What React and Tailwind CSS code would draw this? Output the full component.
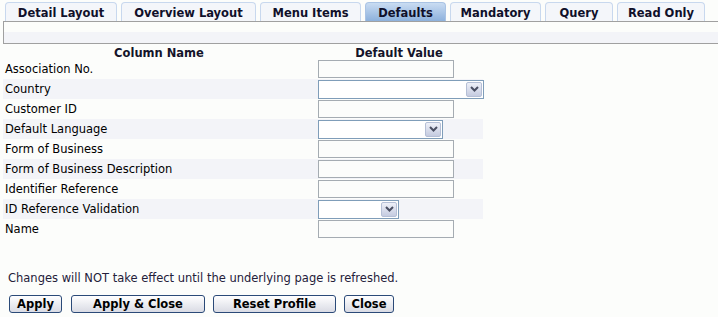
const tabs = [
  { name: "Detail Layout", w: "w-[112px]" },
  { name: "Overview Layout", w: "w-[135px]" },
  { name: "Menu Items", w: "w-[101px]" },
  { name: "Defaults", w: "w-[81px]", active: true },
  { name: "Mandatory", w: "w-[91px]" },
  { name: "Query", w: "w-[68px]" },
  { name: "Read Only", w: "w-[88px]" },
];

const rows = [
  { label: "Association No.", type: "text" },
  { label: "Country", type: "select", w: "w-[166px]" },
  { label: "Customer ID", type: "text" },
  { label: "Default Language", type: "select", w: "w-[125px]" },
  { label: "Form of Business", type: "text" },
  { label: "Form of Business Description", type: "text" },
  { label: "Identifier Reference", type: "text" },
  { label: "ID Reference Validation", type: "select", w: "w-[81px]" },
  { label: "Name", type: "text" },
];

function Chevron() {
  return (
    <svg width="9" height="6" viewBox="0 0 9 6">
      <path d="M1 1 L4.5 4.5 L8 1" fill="none" stroke="#4a4f63" strokeWidth="2" />
    </svg>
  );
}

function FakeSelect({ w }) {
  return (
    <div className={`${w} h-[19px] border border-[#7f9db9] bg-white flex justify-end p-px`}>
      <div className="w-[16px] h-full border border-[#b5bfd6] rounded-[2px] bg-gradient-to-b from-[#eef0f8] to-[#c5cbe0] flex items-center justify-center">
        <Chevron />
      </div>
    </div>
  );
}

function Btn({ children, w }) {
  return (
    <button
      type="button"
      className={`${w} h-[18px] border border-[#2b4a78] rounded-[3px] bg-gradient-to-b from-white to-[#d9dbe4] text-[11.5px] font-bold text-black leading-none flex items-center justify-center pt-px`}
    >
      {children}
    </button>
  );
}

export default function App() {
  return (
    <div className="w-[718px] h-[317px] bg-[#fcfdfb] font-['Tahoma','DejaVu_Sans',sans-serif] text-[11.5px] text-black overflow-hidden">
      {/* tabs */}
      <div className="flex gap-[4px] pl-[5px] pt-[2px] h-[21px]">
        {tabs.map((t) => (
          <div
            key={t.name}
            className={`${t.w} h-[19px] border border-b-0 rounded-t-[4px] flex items-center justify-center pt-[3px] text-[11.5px] font-bold text-[#10102a] ${
              t.active
                ? "border-[#a9c3e4] bg-gradient-to-b from-[#c9dcf2] to-[#8db1dc]"
                : "border-[#c8d8ee] bg-[#f4f6fa]"
            }`}
          >
            {t.name}
          </div>
        ))}
      </div>

      {/* toolbar strip */}
      <div className="ml-[3px] border-t border-l border-b border-[#a0a0a0]">
        <div className="h-[10px] bg-[#fcfdfb]" />
        <div className="h-[11px] bg-[#f3f4f8]" />
      </div>

      {/* defaults table */}
      <div className="ml-[3px] w-[480px]">
        <div className="grid grid-cols-[312px_168px] h-[15px] items-center pt-px font-bold text-[#14142a]">
          <div className="text-center">Column Name</div>
          <div className="text-center">Default Value</div>
        </div>
        {rows.map((r, i) => (
          <div
            key={r.label}
            className={`grid grid-cols-[312px_168px] h-[20px] items-center ${i % 2 ? "bg-[#f3f4f8]" : ""}`}
          >
            <div className="pl-[2px] pt-[2px]">{r.label}</div>
            <div className="pl-[3px]">
              {r.type === "text" ? (
                <div className="w-[136px] h-[18px] border border-[#a5acb2] bg-[#fcfdfb]" />
              ) : (
                <FakeSelect w={r.w} />
              )}
            </div>
          </div>
        ))}
      </div>

      <div className="mt-[33px] pl-[8px] text-[#24203a] leading-[13px]">
        Changes will NOT take effect until the underlying page is refreshed.
      </div>

      <div className="flex mt-[10px] pl-[9px]">
        <Btn w="w-[53px]">Apply</Btn>
        <div className="w-[9px]" />
        <Btn w="w-[134px]">Apply &amp; Close</Btn>
        <div className="w-[8px]" />
        <Btn w="w-[123px]">Reset Profile</Btn>
        <div className="w-[8px]" />
        <Btn w="w-[50px]">Close</Btn>
      </div>
    </div>
  );
}
